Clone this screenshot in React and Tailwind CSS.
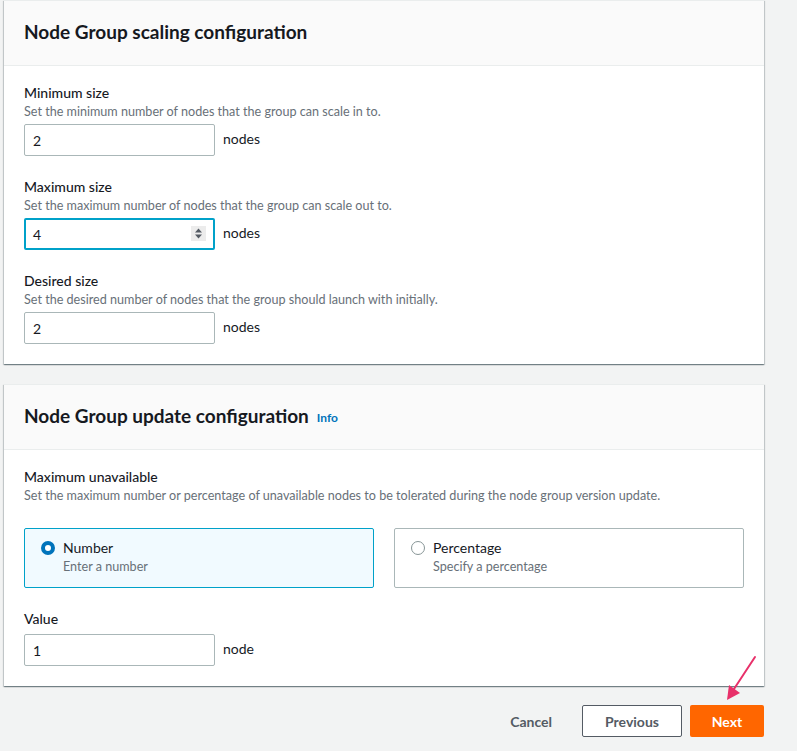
import React from "react";

const font = { fontFamily: "Lato, 'Open Sans', sans-serif" };

function Field({ label, desc, value, unit, focused, className = "" }) {
  return (
    <div className={className}>
      <div className="text-[14px] leading-[20px] font-medium text-[#16191f]">{label}</div>
      {desc && <div className="mt-px text-[12.6px] leading-[16px] text-[#687078]">{desc}</div>}
      <div className={`flex items-center ${desc ? "mt-1" : "mt-[5px]"}`}>
        {focused ? (
          <div className="relative w-[191px] h-[32px] rounded-[2px] border-2 border-[#00a1c9] bg-white flex items-center pl-[7px] text-[14px] text-[#16191f]">
            4
            <div className="absolute right-[7px] top-[6px] w-[15px] h-[15px] bg-[#ececec] flex items-center justify-center">
              <svg width="9" height="11" viewBox="0 0 9 11">
                <path d="M4.5 0.5 L8 4.5 H1 Z" fill="#545b64" />
                <path d="M4.5 10.5 L8 6.5 H1 Z" fill="#545b64" />
              </svg>
            </div>
          </div>
        ) : (
          <div className="w-[191px] h-[32px] rounded-[2px] border border-[#aab7b8] bg-white flex items-center pl-2 text-[14px] text-[#16191f]">
            {value}
          </div>
        )}
        <span className="ml-2 text-[14px] text-[#16191f] -mt-[3px]">{unit}</span>
      </div>
    </div>
  );
}

function Card({ title, info, children }) {
  return (
    <div className="w-[760px] bg-white shadow-[0_1px_1px_0_rgba(0,28,36,0.35),1px_1px_1px_0_rgba(0,28,36,0.15),-1px_1px_1px_0_rgba(0,28,36,0.15)] border-t border-[#eaeded]">
      <div className="h-[65px] bg-[#fafafa] border-b border-[#eaeded] px-5 flex items-center">
        <h2 className="text-[19px] font-bold text-[#16191f] leading-[24px] -mt-[2px]">{title}</h2>
        {info && <span className="ml-2 mt-[2px] text-[12px] font-bold text-[#0073bb]">Info</span>}
      </div>
      <div className="px-5 pt-[17px] pb-5">{children}</div>
    </div>
  );
}

export default function App() {
  return (
    <div style={font} className="relative w-[797px] h-[751px] bg-[#f2f3f3] pl-1 overflow-hidden">
      <Card title="Node Group scaling configuration">
        <Field label="Minimum size" desc="Set the minimum number of nodes that the group can scale in to." value="2" unit="nodes" />
        <Field className="mt-[21px]" label="Maximum size" desc="Set the maximum number of nodes that the group can scale out to." focused unit="nodes" />
        <Field className="mt-[21px]" label="Desired size" desc="Set the desired number of nodes that the group should launch with initially." value="2" unit="nodes" />
      </Card>

      <div className="h-5" />

      <Card title="Node Group update configuration" info>
        <div className="text-[14px] leading-[20px] font-medium text-[#16191f]">Maximum unavailable</div>
        <div className="mt-px text-[12.6px] leading-[16px] text-[#687078]">
          Set the maximum number or percentage of unavailable nodes to be tolerated during the node group version update.
        </div>
        <div className="mt-[24px] grid grid-cols-2 gap-5">
          <div className="h-[60px] rounded-[2px] border border-[#00a1c9] bg-[#f1faff] pl-4 pt-[9px] flex">
            <div className="mt-[3px] w-[14px] h-[14px] rounded-full border-[4px] border-[#0073bb] bg-white" />
            <div className="ml-2">
              <div className="text-[14px] leading-[20px] text-[#16191f]">Number</div>
              <div className="mt-px text-[12.6px] leading-[16px] text-[#687078]">Enter a number</div>
            </div>
          </div>
          <div className="h-[60px] rounded-[2px] border border-[#aab7b8] bg-white pl-4 pt-[9px] flex">
            <div className="mt-[3px] w-[14px] h-[14px] rounded-full border border-[#879596] bg-white" />
            <div className="ml-2">
              <div className="text-[14px] leading-[20px] text-[#16191f]">Percentage</div>
              <div className="mt-px text-[12.6px] leading-[16px] text-[#687078]">Specify a percentage</div>
            </div>
          </div>
        </div>
        <Field className="mt-[21px]" label="Value" value="1" unit="node" />
      </Card>

      <div className="mt-[19px] w-[760px] flex justify-end items-center">
        <button className="h-[32px] px-5 text-[14px] font-bold text-[#545b64] mr-[10px]">Cancel</button>
        <button className="h-[32px] w-[100px] rounded-[2px] border border-[#545b64] bg-white text-[14px] font-bold text-[#545b64]">Previous</button>
        <button className="ml-2 h-[32px] w-[74px] rounded-[2px] bg-[#ff6600] text-[14px] font-bold text-white">Next</button>
      </div>

      <svg className="absolute left-[720px] top-[650px]" width="50" height="55" viewBox="0 0 50 55">
        <line x1="35" y1="7" x2="12" y2="42" stroke="#e8306a" strokeWidth="2" strokeLinecap="round" />
        <path d="M7 50 L9 35 L20 43 Z" fill="#e8306a" />
      </svg>
    </div>
  );
}
